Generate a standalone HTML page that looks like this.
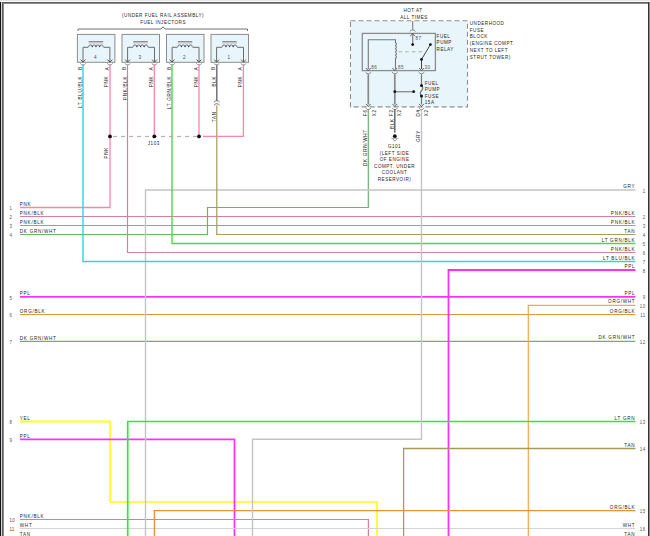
<!DOCTYPE html>
<html><head><meta charset="utf-8"><style>
html,body{margin:0;padding:0;background:#fff;overflow:hidden}
svg{display:block;font-family:"Liberation Sans",sans-serif}
</style></head><body>
<svg width="650" height="536" viewBox="0 0 650 536">
<rect x="0" y="0" width="650" height="536" fill="#fff"/>
<rect x="0" y="0" width="650" height="1" fill="#e6e6e6"/>
<path d="M20,207.5 L110,207.5 L110,64.5" stroke="#f886a6" stroke-width="1.3" fill="none"/>
<path d="M20,216.5 L635.4,216.5" stroke="#d4809a" stroke-width="1" fill="none"/>
<path d="M20,225.5 L635.4,225.5" stroke="#d4809a" stroke-width="1" fill="none"/>
<path d="M20,234.5 L207.5,234.5 L207.5,207.5 L368.3,207.5 L368.3,109" stroke="#6cb26c" stroke-width="1.2" fill="none"/>
<path d="M20,296.9 L635.4,296.9" stroke="#ff30ff" stroke-width="1.8" fill="none"/>
<path d="M20,314.5 L635.4,314.5" stroke="#e8923e" stroke-width="1.2" fill="none"/>
<path d="M20,341.3 L635.4,341.3" stroke="#6cb26c" stroke-width="1.2" fill="none"/>
<path d="M20,421.5 L110,421.5 L110,501.8 L377,501.8 L377,540" stroke="#ffff22" stroke-width="1.8" fill="none"/>
<path d="M20,439.4 L234.5,439.4 L234.5,540" stroke="#ff30ff" stroke-width="1.7" fill="none"/>
<path d="M20,519.5 L368.4,519.5 L368.4,540" stroke="#d4809a" stroke-width="1.2" fill="none"/>
<path d="M20,528.5 L635.4,528.5" stroke="#d4d4d4" stroke-width="1" fill="none"/>
<path d="M145.5,540 L145.5,190 L635.4,190" stroke="#c4c4c4" stroke-width="1.4" fill="none"/>
<path d="M216.8,105.5 L216.8,234.5 L635.4,234.5" stroke="#a89a58" stroke-width="1.2" fill="none"/>
<path d="M172,64.5 L172,243.5 L635.4,243.5" stroke="#4cd84c" stroke-width="1.4" fill="none"/>
<path d="M127.5,64.5 L127.5,252.5 L635.4,252.5" stroke="#d4809a" stroke-width="1.2" fill="none"/>
<path d="M83,64.5 L83,261.5 L635.4,261.5" stroke="#38d0de" stroke-width="1.4" fill="none"/>
<path d="M448.5,540 L448.5,270 L635.4,270" stroke="#ff30ff" stroke-width="1.8" fill="none"/>
<path d="M528.3,540 L528.3,305.4 L635.4,305.4" stroke="#f5a650" stroke-width="1.2" fill="none"/>
<path d="M127.7,540 L127.7,421.5 L635.4,421.5" stroke="#28f028" stroke-width="1.7" fill="none"/>
<path d="M403.6,540 L403.6,448.5 L635.4,448.5" stroke="#a89a58" stroke-width="1.3" fill="none"/>
<path d="M154.4,540 L154.4,510.6 L635.4,510.6" stroke="#e8923e" stroke-width="1.4" fill="none"/>
<path d="M421.5,109 L421.5,439.2 L252.5,439.2 L252.5,540" stroke="#c4c4c4" stroke-width="1.4" fill="none"/>
<path d="M154.3,64.5 L154.3,136.4" stroke="#f886a6" stroke-width="1.3" fill="none"/>
<path d="M199,64.5 L199,136.4" stroke="#f886a6" stroke-width="1.3" fill="none"/>
<path d="M243.4,64.5 L243.4,136.4 L203,136.4" stroke="#f886a6" stroke-width="1.3" fill="none"/>
<path d="M216.8,64.5 L216.8,101" stroke="#606060" stroke-width="1.3" fill="none"/>
<path d="M113,136.4 H197" stroke="#a8a8a8" stroke-width="1" stroke-dasharray="4,4" fill="none"/>
<circle cx="110" cy="136.4" r="1.9" fill="#111"/>
<circle cx="154.3" cy="136.4" r="1.9" fill="#111"/>
<circle cx="199" cy="136.4" r="1.9" fill="#111"/>
<text transform="translate(153.755,144.9) scale(0.85,1)" font-size="5.4" letter-spacing="0.6" text-anchor="middle" fill="#262626">J103</text>
<text transform="translate(19.8,206.0) scale(0.85,1)" font-size="5.4" letter-spacing="0.86" text-anchor="start" fill="#262626">PNK</text>
<text transform="translate(9.4,210.4) scale(0.85,1)" font-size="5.2" letter-spacing="0.4" text-anchor="start" fill="#555">1</text>
<text transform="translate(19.8,215.0) scale(0.85,1)" font-size="5.4" letter-spacing="0.86" text-anchor="start" fill="#262626">PNK/BLK</text>
<text transform="translate(9.4,219.4) scale(0.85,1)" font-size="5.2" letter-spacing="0.4" text-anchor="start" fill="#555">2</text>
<text transform="translate(19.8,224.0) scale(0.85,1)" font-size="5.4" letter-spacing="0.86" text-anchor="start" fill="#262626">PNK/BLK</text>
<text transform="translate(9.4,228.4) scale(0.85,1)" font-size="5.2" letter-spacing="0.4" text-anchor="start" fill="#555">3</text>
<text transform="translate(19.8,233.0) scale(0.85,1)" font-size="5.4" letter-spacing="0.86" text-anchor="start" fill="#262626">DK GRN/WHT</text>
<text transform="translate(9.4,237.4) scale(0.85,1)" font-size="5.2" letter-spacing="0.4" text-anchor="start" fill="#555">4</text>
<text transform="translate(19.8,295.4) scale(0.85,1)" font-size="5.4" letter-spacing="0.86" text-anchor="start" fill="#262626">PPL</text>
<text transform="translate(9.4,299.79999999999995) scale(0.85,1)" font-size="5.2" letter-spacing="0.4" text-anchor="start" fill="#555">5</text>
<text transform="translate(19.8,313.0) scale(0.85,1)" font-size="5.4" letter-spacing="0.86" text-anchor="start" fill="#262626">ORG/BLK</text>
<text transform="translate(9.4,317.4) scale(0.85,1)" font-size="5.2" letter-spacing="0.4" text-anchor="start" fill="#555">6</text>
<text transform="translate(19.8,339.8) scale(0.85,1)" font-size="5.4" letter-spacing="0.86" text-anchor="start" fill="#262626">DK GRN/WHT</text>
<text transform="translate(9.4,344.2) scale(0.85,1)" font-size="5.2" letter-spacing="0.4" text-anchor="start" fill="#555">7</text>
<text transform="translate(19.8,420.0) scale(0.85,1)" font-size="5.4" letter-spacing="0.86" text-anchor="start" fill="#262626">YEL</text>
<text transform="translate(9.4,424.4) scale(0.85,1)" font-size="5.2" letter-spacing="0.4" text-anchor="start" fill="#555">8</text>
<text transform="translate(19.8,437.9) scale(0.85,1)" font-size="5.4" letter-spacing="0.86" text-anchor="start" fill="#262626">PPL</text>
<text transform="translate(9.4,442.29999999999995) scale(0.85,1)" font-size="5.2" letter-spacing="0.4" text-anchor="start" fill="#555">9</text>
<text transform="translate(19.8,518.0) scale(0.85,1)" font-size="5.4" letter-spacing="0.86" text-anchor="start" fill="#262626">PNK/BLK</text>
<text transform="translate(9.4,522.4) scale(0.85,1)" font-size="5.2" letter-spacing="0.4" text-anchor="start" fill="#555">10</text>
<text transform="translate(19.8,527.0) scale(0.85,1)" font-size="5.4" letter-spacing="0.86" text-anchor="start" fill="#262626">WHT</text>
<text transform="translate(9.4,531.4) scale(0.85,1)" font-size="5.2" letter-spacing="0.4" text-anchor="start" fill="#555">11</text>
<text transform="translate(19.8,536.0) scale(0.85,1)" font-size="5.4" letter-spacing="0.86" text-anchor="start" fill="#262626">TAN</text>
<text transform="translate(9.4,540.4) scale(0.85,1)" font-size="5.2" letter-spacing="0.4" text-anchor="start" fill="#555">12</text>
<text transform="translate(635.331,188.0) scale(0.85,1)" font-size="5.4" letter-spacing="0.86" text-anchor="end" fill="#262626">GRY</text>
<text transform="translate(645.44,192.5) scale(0.85,1)" font-size="5.2" letter-spacing="0.4" text-anchor="end" fill="#555">1</text>
<text transform="translate(635.331,214.5) scale(0.85,1)" font-size="5.4" letter-spacing="0.86" text-anchor="end" fill="#262626">PNK/BLK</text>
<text transform="translate(645.44,219.0) scale(0.85,1)" font-size="5.2" letter-spacing="0.4" text-anchor="end" fill="#555">2</text>
<text transform="translate(635.331,223.5) scale(0.85,1)" font-size="5.4" letter-spacing="0.86" text-anchor="end" fill="#262626">PNK/BLK</text>
<text transform="translate(645.44,228.0) scale(0.85,1)" font-size="5.2" letter-spacing="0.4" text-anchor="end" fill="#555">3</text>
<text transform="translate(635.331,232.5) scale(0.85,1)" font-size="5.4" letter-spacing="0.86" text-anchor="end" fill="#262626">TAN</text>
<text transform="translate(645.44,237.0) scale(0.85,1)" font-size="5.2" letter-spacing="0.4" text-anchor="end" fill="#555">4</text>
<text transform="translate(635.331,241.5) scale(0.85,1)" font-size="5.4" letter-spacing="0.86" text-anchor="end" fill="#262626">LT GRN/BLK</text>
<text transform="translate(645.44,246.0) scale(0.85,1)" font-size="5.2" letter-spacing="0.4" text-anchor="end" fill="#555">5</text>
<text transform="translate(635.331,250.5) scale(0.85,1)" font-size="5.4" letter-spacing="0.86" text-anchor="end" fill="#262626">PNK/BLK</text>
<text transform="translate(645.44,255.0) scale(0.85,1)" font-size="5.2" letter-spacing="0.4" text-anchor="end" fill="#555">6</text>
<text transform="translate(635.331,259.5) scale(0.85,1)" font-size="5.4" letter-spacing="0.86" text-anchor="end" fill="#262626">LT BLU/BLK</text>
<text transform="translate(645.44,264.0) scale(0.85,1)" font-size="5.2" letter-spacing="0.4" text-anchor="end" fill="#555">7</text>
<text transform="translate(635.331,268.0) scale(0.85,1)" font-size="5.4" letter-spacing="0.86" text-anchor="end" fill="#262626">PPL</text>
<text transform="translate(645.44,272.5) scale(0.85,1)" font-size="5.2" letter-spacing="0.4" text-anchor="end" fill="#555">8</text>
<text transform="translate(635.331,294.9) scale(0.85,1)" font-size="5.4" letter-spacing="0.86" text-anchor="end" fill="#262626">PPL</text>
<text transform="translate(645.44,299.4) scale(0.85,1)" font-size="5.2" letter-spacing="0.4" text-anchor="end" fill="#555">9</text>
<text transform="translate(635.331,303.4) scale(0.85,1)" font-size="5.4" letter-spacing="0.86" text-anchor="end" fill="#262626">ORG/WHT</text>
<text transform="translate(645.44,307.9) scale(0.85,1)" font-size="5.2" letter-spacing="0.4" text-anchor="end" fill="#555">10</text>
<text transform="translate(635.331,312.5) scale(0.85,1)" font-size="5.4" letter-spacing="0.86" text-anchor="end" fill="#262626">ORG/BLK</text>
<text transform="translate(645.44,317.0) scale(0.85,1)" font-size="5.2" letter-spacing="0.4" text-anchor="end" fill="#555">11</text>
<text transform="translate(635.331,339.3) scale(0.85,1)" font-size="5.4" letter-spacing="0.86" text-anchor="end" fill="#262626">DK GRN/WHT</text>
<text transform="translate(645.44,343.8) scale(0.85,1)" font-size="5.2" letter-spacing="0.4" text-anchor="end" fill="#555">12</text>
<text transform="translate(635.331,419.5) scale(0.85,1)" font-size="5.4" letter-spacing="0.86" text-anchor="end" fill="#262626">LT GRN</text>
<text transform="translate(645.44,424.0) scale(0.85,1)" font-size="5.2" letter-spacing="0.4" text-anchor="end" fill="#555">13</text>
<text transform="translate(635.331,446.5) scale(0.85,1)" font-size="5.4" letter-spacing="0.86" text-anchor="end" fill="#262626">TAN</text>
<text transform="translate(645.44,451.0) scale(0.85,1)" font-size="5.2" letter-spacing="0.4" text-anchor="end" fill="#555">14</text>
<text transform="translate(635.331,508.6) scale(0.85,1)" font-size="5.4" letter-spacing="0.86" text-anchor="end" fill="#262626">ORG/BLK</text>
<text transform="translate(645.44,513.1) scale(0.85,1)" font-size="5.2" letter-spacing="0.4" text-anchor="end" fill="#555">15</text>
<text transform="translate(635.331,526.5) scale(0.85,1)" font-size="5.4" letter-spacing="0.86" text-anchor="end" fill="#262626">WHT</text>
<text transform="translate(645.44,531.0) scale(0.85,1)" font-size="5.2" letter-spacing="0.4" text-anchor="end" fill="#555">16</text>
<text transform="translate(635.331,535.5) scale(0.85,1)" font-size="5.4" letter-spacing="0.86" text-anchor="end" fill="#262626">TAN</text>
<text transform="translate(645.44,540.0) scale(0.85,1)" font-size="5.2" letter-spacing="0.4" text-anchor="end" fill="#555">17</text>
<text transform="translate(163.055,17.3) scale(0.85,1)" font-size="5.4" letter-spacing="0.6" text-anchor="middle" fill="#262626">(UNDER FUEL RAIL ASSEMBLY)</text>
<text transform="translate(163.055,23.8) scale(0.85,1)" font-size="5.4" letter-spacing="0.6" text-anchor="middle" fill="#262626">FUEL INJECTORS</text>
<path d="M78,31 V29 H161 L163,26.8 L165,29 H247.5 V31" stroke="#707070" stroke-width="1" fill="none"/>
<rect x="77.4" y="34.4" width="37.5" height="27.9" fill="#e8f6fc" stroke="#8c8c8c" stroke-width="1"/>
<path d="M88.7,41.6 H103.2" stroke="#666" stroke-width="0.8"/>
<path d="M88.7,42.9 H103.2" stroke="#aaa" stroke-width="0.9"/>
<path d="M83.0,61.8 V47.3 H88.2 L88.7,46.6 a1.8125,1.63125 0 0 1 3.625,0 a1.8125,1.63125 0 0 1 3.625,0 a1.8125,1.63125 0 0 1 3.625,0 a1.8125,1.63125 0 0 1 3.625,0 L103.7,47.3 H109.9 V61.8" stroke="#6c6c6c" stroke-width="1" fill="none"/>
<circle cx="92.325" cy="46.6" r="0.7" fill="#333"/>
<circle cx="95.95" cy="46.6" r="0.7" fill="#333"/>
<circle cx="99.575" cy="46.6" r="0.7" fill="#333"/>
<path d="M80.6,59.6 L83.0,62.2 L85.4,59.6" stroke="#444" stroke-width="0.9" fill="none"/>
<path d="M107.5,59.6 L109.9,62.2 L112.30000000000001,59.6" stroke="#444" stroke-width="0.9" fill="none"/>
<path d="M80.2,63.4 Q83.0,66.6 85.8,63.4" stroke="#8a8a8a" stroke-width="0.9" fill="none"/>
<path d="M107.10000000000001,63.4 Q109.9,66.6 112.7,63.4" stroke="#8a8a8a" stroke-width="0.9" fill="none"/>
<text transform="translate(95.2,59.2) scale(0.85,1)" font-size="5.4" letter-spacing="0" text-anchor="middle" fill="#444">4</text>
<rect x="122" y="34.4" width="37.5" height="27.9" fill="#e8f6fc" stroke="#8c8c8c" stroke-width="1"/>
<path d="M133.3,41.6 H147.8" stroke="#666" stroke-width="0.8"/>
<path d="M133.3,42.9 H147.8" stroke="#aaa" stroke-width="0.9"/>
<path d="M127.6,61.8 V47.3 H132.8 L133.3,46.6 a1.8125,1.63125 0 0 1 3.625,0 a1.8125,1.63125 0 0 1 3.625,0 a1.8125,1.63125 0 0 1 3.625,0 a1.8125,1.63125 0 0 1 3.625,0 L148.3,47.3 H154.5 V61.8" stroke="#6c6c6c" stroke-width="1" fill="none"/>
<circle cx="136.925" cy="46.6" r="0.7" fill="#333"/>
<circle cx="140.55" cy="46.6" r="0.7" fill="#333"/>
<circle cx="144.175" cy="46.6" r="0.7" fill="#333"/>
<path d="M125.19999999999999,59.6 L127.6,62.2 L130.0,59.6" stroke="#444" stroke-width="0.9" fill="none"/>
<path d="M152.1,59.6 L154.5,62.2 L156.9,59.6" stroke="#444" stroke-width="0.9" fill="none"/>
<path d="M124.8,63.4 Q127.6,66.6 130.4,63.4" stroke="#8a8a8a" stroke-width="0.9" fill="none"/>
<path d="M151.7,63.4 Q154.5,66.6 157.3,63.4" stroke="#8a8a8a" stroke-width="0.9" fill="none"/>
<text transform="translate(139.79999999999998,59.2) scale(0.85,1)" font-size="5.4" letter-spacing="0" text-anchor="middle" fill="#444">3</text>
<rect x="166.5" y="34.4" width="37.5" height="27.9" fill="#e8f6fc" stroke="#8c8c8c" stroke-width="1"/>
<path d="M177.8,41.6 H192.3" stroke="#666" stroke-width="0.8"/>
<path d="M177.8,42.9 H192.3" stroke="#aaa" stroke-width="0.9"/>
<path d="M172.1,61.8 V47.3 H177.3 L177.8,46.6 a1.8125,1.63125 0 0 1 3.625,0 a1.8125,1.63125 0 0 1 3.625,0 a1.8125,1.63125 0 0 1 3.625,0 a1.8125,1.63125 0 0 1 3.625,0 L192.8,47.3 H199.0 V61.8" stroke="#6c6c6c" stroke-width="1" fill="none"/>
<circle cx="181.425" cy="46.6" r="0.7" fill="#333"/>
<circle cx="185.05" cy="46.6" r="0.7" fill="#333"/>
<circle cx="188.675" cy="46.6" r="0.7" fill="#333"/>
<path d="M169.7,59.6 L172.1,62.2 L174.5,59.6" stroke="#444" stroke-width="0.9" fill="none"/>
<path d="M196.6,59.6 L199.0,62.2 L201.4,59.6" stroke="#444" stroke-width="0.9" fill="none"/>
<path d="M169.29999999999998,63.4 Q172.1,66.6 174.9,63.4" stroke="#8a8a8a" stroke-width="0.9" fill="none"/>
<path d="M196.2,63.4 Q199.0,66.6 201.8,63.4" stroke="#8a8a8a" stroke-width="0.9" fill="none"/>
<text transform="translate(184.29999999999998,59.2) scale(0.85,1)" font-size="5.4" letter-spacing="0" text-anchor="middle" fill="#444">2</text>
<rect x="211" y="34.4" width="37.5" height="27.9" fill="#e8f6fc" stroke="#8c8c8c" stroke-width="1"/>
<path d="M222.3,41.6 H236.8" stroke="#666" stroke-width="0.8"/>
<path d="M222.3,42.9 H236.8" stroke="#aaa" stroke-width="0.9"/>
<path d="M216.6,61.8 V47.3 H221.8 L222.3,46.6 a1.8125,1.63125 0 0 1 3.625,0 a1.8125,1.63125 0 0 1 3.625,0 a1.8125,1.63125 0 0 1 3.625,0 a1.8125,1.63125 0 0 1 3.625,0 L237.3,47.3 H243.5 V61.8" stroke="#6c6c6c" stroke-width="1" fill="none"/>
<circle cx="225.925" cy="46.6" r="0.7" fill="#333"/>
<circle cx="229.55" cy="46.6" r="0.7" fill="#333"/>
<circle cx="233.175" cy="46.6" r="0.7" fill="#333"/>
<path d="M214.2,59.6 L216.6,62.2 L219.0,59.6" stroke="#444" stroke-width="0.9" fill="none"/>
<path d="M241.1,59.6 L243.5,62.2 L245.9,59.6" stroke="#444" stroke-width="0.9" fill="none"/>
<path d="M213.79999999999998,63.4 Q216.6,66.6 219.4,63.4" stroke="#8a8a8a" stroke-width="0.9" fill="none"/>
<path d="M240.7,63.4 Q243.5,66.6 246.3,63.4" stroke="#8a8a8a" stroke-width="0.9" fill="none"/>
<text transform="translate(228.79999999999998,59.2) scale(0.85,1)" font-size="5.4" letter-spacing="0" text-anchor="middle" fill="#444">1</text>
<text transform="translate(81.8,66.031) rotate(-90) scale(0.85,1)" font-size="5.9" letter-spacing="0.86" text-anchor="end" fill="#262626">B</text>
<text transform="translate(108.60000000000001,66.531) rotate(-90) scale(0.85,1)" font-size="5.9" letter-spacing="0.86" text-anchor="end" fill="#262626">A</text>
<text transform="translate(126.39999999999999,66.031) rotate(-90) scale(0.85,1)" font-size="5.9" letter-spacing="0.86" text-anchor="end" fill="#262626">B</text>
<text transform="translate(153.20000000000002,66.531) rotate(-90) scale(0.85,1)" font-size="5.9" letter-spacing="0.86" text-anchor="end" fill="#262626">A</text>
<text transform="translate(170.9,66.031) rotate(-90) scale(0.85,1)" font-size="5.9" letter-spacing="0.86" text-anchor="end" fill="#262626">B</text>
<text transform="translate(197.70000000000002,66.531) rotate(-90) scale(0.85,1)" font-size="5.9" letter-spacing="0.86" text-anchor="end" fill="#262626">A</text>
<text transform="translate(215.4,66.031) rotate(-90) scale(0.85,1)" font-size="5.9" letter-spacing="0.86" text-anchor="end" fill="#262626">B</text>
<text transform="translate(242.20000000000002,66.531) rotate(-90) scale(0.85,1)" font-size="5.9" letter-spacing="0.86" text-anchor="end" fill="#262626">A</text>
<text transform="translate(82.0,75.631) rotate(-90) scale(0.85,1)" font-size="5.4" letter-spacing="0.86" text-anchor="end" fill="#262626">LT BLU/BLK</text>
<text transform="translate(108.2,75.631) rotate(-90) scale(0.85,1)" font-size="5.4" letter-spacing="0.86" text-anchor="end" fill="#262626">PNK</text>
<text transform="translate(126.6,75.631) rotate(-90) scale(0.85,1)" font-size="5.4" letter-spacing="0.86" text-anchor="end" fill="#262626">PNK/BLK</text>
<text transform="translate(152.9,75.631) rotate(-90) scale(0.85,1)" font-size="5.4" letter-spacing="0.86" text-anchor="end" fill="#262626">PNK</text>
<text transform="translate(171.10000000000002,75.631) rotate(-90) scale(0.85,1)" font-size="5.4" letter-spacing="0.86" text-anchor="end" fill="#262626">LT GRN/BLK</text>
<text transform="translate(197.5,75.631) rotate(-90) scale(0.85,1)" font-size="5.4" letter-spacing="0.86" text-anchor="end" fill="#262626">PNK</text>
<text transform="translate(215.60000000000002,75.631) rotate(-90) scale(0.85,1)" font-size="5.4" letter-spacing="0.86" text-anchor="end" fill="#262626">BLK</text>
<text transform="translate(241.9,75.631) rotate(-90) scale(0.85,1)" font-size="5.4" letter-spacing="0.86" text-anchor="end" fill="#262626">PNK</text>
<text transform="translate(215.60000000000002,111.231) rotate(-90) scale(0.85,1)" font-size="5.4" letter-spacing="0.86" text-anchor="end" fill="#262626">TAN</text>
<text transform="translate(108.2,146.831) rotate(-90) scale(0.85,1)" font-size="5.4" letter-spacing="0.86" text-anchor="end" fill="#262626">PNK</text>
<path d="M213.9,102.2 Q216.8,99 219.7,102.2 M213.9,105.3 Q216.8,102.1 219.7,105.3" stroke="#6a6a6a" stroke-width="0.9" fill="none"/>
<rect x="350.5" y="20.8" width="117" height="86.1" fill="#e8f6fc" stroke="#909090" stroke-width="1.1" stroke-dasharray="5,3"/>
<rect x="362.3" y="33.4" width="73.1" height="37.2" fill="none" stroke="#8c8c8c" stroke-width="1.3"/>
<text transform="translate(413.055,12.2) scale(0.85,1)" font-size="5.4" letter-spacing="0.6" text-anchor="middle" fill="#262626">HOT AT</text>
<text transform="translate(414.055,19) scale(0.85,1)" font-size="5.4" letter-spacing="0.6" text-anchor="middle" fill="#262626">ALL TIMES</text>
<text transform="translate(469.8,25.0) scale(0.85,1)" font-size="5.4" letter-spacing="0.6" text-anchor="start" fill="#262626">UNDERHOOD</text>
<text transform="translate(469.8,31.72) scale(0.85,1)" font-size="5.4" letter-spacing="0.6" text-anchor="start" fill="#262626">FUSE</text>
<text transform="translate(469.8,38.44) scale(0.85,1)" font-size="5.4" letter-spacing="0.6" text-anchor="start" fill="#262626">BLOCK</text>
<text transform="translate(469.8,45.16) scale(0.85,1)" font-size="5.4" letter-spacing="0.6" text-anchor="start" fill="#262626">(ENGINE COMPT.</text>
<text transform="translate(469.8,51.879999999999995) scale(0.85,1)" font-size="5.4" letter-spacing="0.6" text-anchor="start" fill="#262626">NEXT TO LEFT</text>
<text transform="translate(469.8,58.6) scale(0.85,1)" font-size="5.4" letter-spacing="0.6" text-anchor="start" fill="#262626">STRUT TOWER)</text>
<text transform="translate(436.6,37.8) scale(0.85,1)" font-size="5.4" letter-spacing="0.6" text-anchor="start" fill="#262626">FUEL</text>
<text transform="translate(436.6,44.4) scale(0.85,1)" font-size="5.4" letter-spacing="0.6" text-anchor="start" fill="#262626">PUMP</text>
<text transform="translate(436.6,51.0) scale(0.85,1)" font-size="5.4" letter-spacing="0.6" text-anchor="start" fill="#262626">RELAY</text>
<text transform="translate(424.8,84.5) scale(0.85,1)" font-size="5.4" letter-spacing="0.6" text-anchor="start" fill="#262626">FUEL</text>
<text transform="translate(424.8,91.1) scale(0.85,1)" font-size="5.4" letter-spacing="0.6" text-anchor="start" fill="#262626">PUMP</text>
<text transform="translate(424.8,97.7) scale(0.85,1)" font-size="5.4" letter-spacing="0.6" text-anchor="start" fill="#262626">FUSE</text>
<text transform="translate(424.8,104.3) scale(0.85,1)" font-size="5.4" letter-spacing="0.6" text-anchor="start" fill="#262626">15A</text>
<text transform="translate(415.6,39.5) scale(0.85,1)" font-size="5.4" letter-spacing="0.4" text-anchor="start" fill="#555">87</text>
<text transform="translate(371.3,68.5) scale(0.85,1)" font-size="5.4" letter-spacing="0.4" text-anchor="start" fill="#555">86</text>
<text transform="translate(398,68.5) scale(0.85,1)" font-size="5.4" letter-spacing="0.4" text-anchor="start" fill="#555">85</text>
<text transform="translate(424.6,68.5) scale(0.85,1)" font-size="5.4" letter-spacing="0.4" text-anchor="start" fill="#555">30</text>
<path d="M412.7,21 V29.5" stroke="#888" stroke-width="1.2"/>
<path d="M409.9,31.4 Q412.7,28.2 415.5,31.4" stroke="#777" stroke-width="0.9" fill="none"/>
<path d="M412.7,33.6 V44.6" stroke="#888" stroke-width="1.3" fill="none"/><path d="M410.3,36.3 L412.7,33.4 L415.1,36.3" stroke="#555" stroke-width="0.9" fill="none"/>
<circle cx="412.7" cy="44.6" r="1.4" fill="#111"/>
<path d="M368.3,69 V39.8 H395.5 V42.5 q1.8,1.6 0,3.2 q1.8,1.6 0,3.2 q1.8,1.6 0,3.2 q1.8,1.6 0,3.2 q1.8,1.6 0,3.2 V69" stroke="#777" stroke-width="1.1" fill="none"/>
<path d="M398.5,51.8 H425" stroke="#aaa" stroke-width="1" stroke-dasharray="3.5,3.2"/>
<path d="M430.4,44.6 L421.5,59.4 V69" stroke="#444" stroke-width="1" fill="none"/>
<circle cx="430.4" cy="44.6" r="1.4" fill="#111"/>
<circle cx="421.5" cy="59.4" r="1.4" fill="#111"/>
<path d="M365.90000000000003,68.0 L368.3,70.6 L370.7,68.0" stroke="#555" stroke-width="0.9" fill="none"/>
<path d="M365.5,72.2 Q368.3,75.4 371.1,72.2" stroke="#777" stroke-width="0.9" fill="none"/>
<path d="M368.3,74.2 V104.5" stroke="#888" stroke-width="1.7" fill="none"/>
<path d="M365.90000000000003,103.9 L368.3,106.5 L370.7,103.9" stroke="#555" stroke-width="0.9" fill="none"/>
<path d="M365.5,108 Q368.3,111.2 371.1,108" stroke="#888" stroke-width="0.9" fill="none"/>
<path d="M392.40000000000003,68.0 L394.8,70.6 L397.2,68.0" stroke="#555" stroke-width="0.9" fill="none"/>
<path d="M392.0,72.2 Q394.8,75.4 397.6,72.2" stroke="#777" stroke-width="0.9" fill="none"/>
<path d="M394.8,74.2 V104.5" stroke="#888" stroke-width="1.7" fill="none"/>
<path d="M392.40000000000003,103.9 L394.8,106.5 L397.2,103.9" stroke="#555" stroke-width="0.9" fill="none"/>
<path d="M392.0,108 Q394.8,111.2 397.6,108" stroke="#888" stroke-width="0.9" fill="none"/>
<path d="M419.1,68.0 L421.5,70.6 L423.9,68.0" stroke="#555" stroke-width="0.9" fill="none"/>
<path d="M418.7,72.2 Q421.5,75.4 424.3,72.2" stroke="#777" stroke-width="0.9" fill="none"/>
<path d="M419.1,103.9 L421.5,106.5 L423.9,103.9" stroke="#555" stroke-width="0.9" fill="none"/>
<path d="M418.7,108 Q421.5,111.2 424.3,108" stroke="#888" stroke-width="0.9" fill="none"/>
<path d="M421.5,74.2 V85.5 q2.4,2.6 0,5.25 q-2.4,2.6 0,5.25 V104.5" stroke="#777" stroke-width="1.2" fill="none"/>
<circle cx="421.5" cy="85.5" r="1.5" fill="#111"/>
<circle cx="421.5" cy="96" r="1.5" fill="#111"/>
<path d="M394.8,91.7 H413.7" stroke="#888" stroke-width="1.3"/>
<circle cx="394.8" cy="91.7" r="1.4" fill="#111"/>
<circle cx="413.7" cy="91.7" r="1.4" fill="#111"/>
<text transform="translate(366.6,109.231) rotate(-90) scale(0.85,1)" font-size="5.4" letter-spacing="0.86" text-anchor="end" fill="#262626">F6</text>
<text transform="translate(375.6,109.231) rotate(-90) scale(0.85,1)" font-size="5.4" letter-spacing="0.86" text-anchor="end" fill="#262626">X2</text>
<text transform="translate(393.1,109.231) rotate(-90) scale(0.85,1)" font-size="5.4" letter-spacing="0.86" text-anchor="end" fill="#262626">F2</text>
<text transform="translate(401.40000000000003,109.231) rotate(-90) scale(0.85,1)" font-size="5.4" letter-spacing="0.86" text-anchor="end" fill="#262626">X2</text>
<text transform="translate(419.5,109.231) rotate(-90) scale(0.85,1)" font-size="5.4" letter-spacing="0.86" text-anchor="end" fill="#262626">D4</text>
<text transform="translate(428.2,109.231) rotate(-90) scale(0.85,1)" font-size="5.4" letter-spacing="0.86" text-anchor="end" fill="#262626">X2</text>
<text transform="translate(367.1,129.131) rotate(-90) scale(0.85,1)" font-size="5.4" letter-spacing="0.86" text-anchor="end" fill="#262626">DK GRN/WHT</text>
<text transform="translate(393.6,118.231) rotate(-90) scale(0.85,1)" font-size="5.4" letter-spacing="0.86" text-anchor="end" fill="#262626">BLK</text>
<text transform="translate(420.0,130.031) rotate(-90) scale(0.85,1)" font-size="5.4" letter-spacing="0.86" text-anchor="end" fill="#262626">GRY</text>
<path d="M394.8,109 L394.8,132.5" stroke="#6a6a6a" stroke-width="1.5" fill="none"/>
<circle cx="394.8" cy="136.2" r="1.9" fill="#111"/>
<path d="M391.3,138.4 H398.2" stroke="#999" stroke-width="0.8"/><path d="M392.6,138.6 L394.8,141.2 L397,138.6" stroke="#888" stroke-width="0.9" fill="none"/>
<text transform="translate(394.555,148.0) scale(0.85,1)" font-size="5.4" letter-spacing="0.6" text-anchor="middle" fill="#262626">G101</text>
<text transform="translate(394.555,154.62) scale(0.85,1)" font-size="5.4" letter-spacing="0.6" text-anchor="middle" fill="#262626">(LEFT SIDE</text>
<text transform="translate(394.555,161.24) scale(0.85,1)" font-size="5.4" letter-spacing="0.6" text-anchor="middle" fill="#262626">OF ENGINE</text>
<text transform="translate(394.555,167.86) scale(0.85,1)" font-size="5.4" letter-spacing="0.6" text-anchor="middle" fill="#262626">COMPT. UNDER</text>
<text transform="translate(394.555,174.48) scale(0.85,1)" font-size="5.4" letter-spacing="0.6" text-anchor="middle" fill="#262626">COOLANT</text>
<text transform="translate(394.555,181.1) scale(0.85,1)" font-size="5.4" letter-spacing="0.6" text-anchor="middle" fill="#262626">RESERVOIR)</text>
<rect x="0" y="2" width="1" height="534" fill="#111"/>
<rect x="1" y="2" width="1" height="534" fill="#d8d8d8"/>
<rect x="2" y="2" width="647" height="1" fill="#5c5c5c"/>
<rect x="2" y="3" width="646" height="1" fill="#8c8c8c"/>
<rect x="2" y="2" width="1" height="534" fill="#5c5c5c"/>
<rect x="3" y="3" width="1" height="533" fill="#8c8c8c"/>
<rect x="648" y="2" width="1" height="534" fill="#333"/>
<rect x="649" y="2" width="1" height="534" fill="#8c8c8c"/>
</svg>
</body></html>
